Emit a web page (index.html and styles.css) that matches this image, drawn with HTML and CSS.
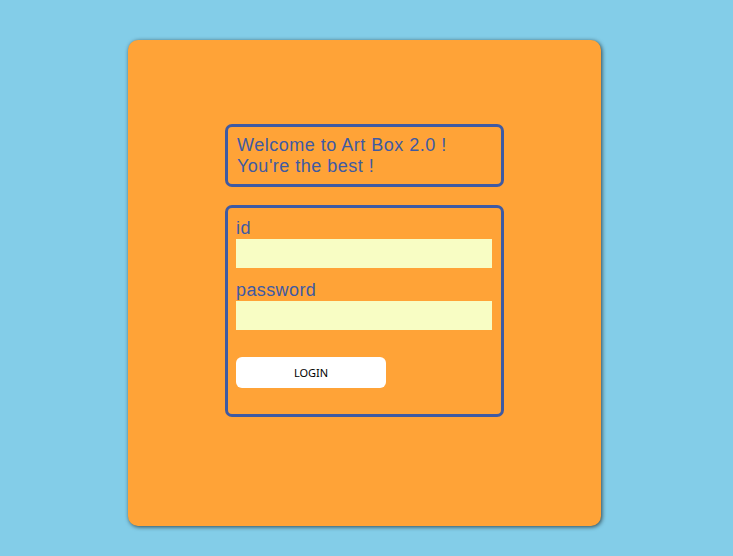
FILE: index.html
```html
<!DOCTYPE html>
<html>
<head>
<meta charset="utf-8">
<link rel="stylesheet" href="styles.css">
</head>
<body>
<div class="card">
  <div class="welcome">
    <p class="line">Welcome to Art Box 2.0 !</p>
    <p class="line">You're the best !</p>
  </div>
  <form class="login">
    <label class="label">id</label>
    <input class="field" type="text">
    <label class="label pw">password</label>
    <input class="field" type="password">
    <button class="btn" type="button">LOGIN</button>
  </form>
</div>
</body>
</html>
```
FILE: styles.css
```css
html, body {
  margin: 0;
  padding: 0;
  background: #83cde8;
  height: 100%;
}
body {
  padding-top: 40px;
  box-sizing: border-box;
  font-family: "Liberation Sans", Arial, sans-serif;
}
.card {
  margin-left: 128px;
  width: 473px;
  height: 486px;
  background: #ffa337;
  border-radius: 10px;
  box-shadow: 1px 1px 4px rgba(0, 0, 0, 0.65);
  padding: 84px 0 0 97px;
  box-sizing: border-box;
  display: flex;
  flex-direction: column;
  gap: 18px;
}
.welcome {
  width: 279px;
  height: 63px;
  box-sizing: border-box;
  border: 3px solid #3e5aa3;
  border-radius: 7px;
  padding: 8px 9px 0;
  color: #3e5aa3;
  font-size: 18px;
  line-height: 21px;
}
.line {
  margin: 0;
  height: 21px;
  white-space: nowrap;
  letter-spacing: 0.5px;
}
.login {
  margin: 0;
  width: 279px;
  height: 212px;
  box-sizing: border-box;
  border: 3px solid #3e5aa3;
  border-radius: 7px;
  padding: 9px 8px 8px;
  display: flex;
  flex-direction: column;
  align-items: flex-start;
}
.label {
  color: #3e5aa3;
  font-size: 18px;
  line-height: 22px;
  letter-spacing: 0.4px;
}
.pw {
  margin-top: 11px;
}
.field {
  width: 256px;
  height: 29px;
  box-sizing: border-box;
  border: none;
  background: #f8fdc4;
  margin: 0;
  padding: 0;
}
.btn {
  margin-top: 27px;
  width: 150px;
  height: 31px;
  border: none;
  border-radius: 6px;
  background: #ffffff;
  color: #000;
  font-family: "Noto Sans", sans-serif;
  font-size: 11px;
  padding: 0;
}
```
